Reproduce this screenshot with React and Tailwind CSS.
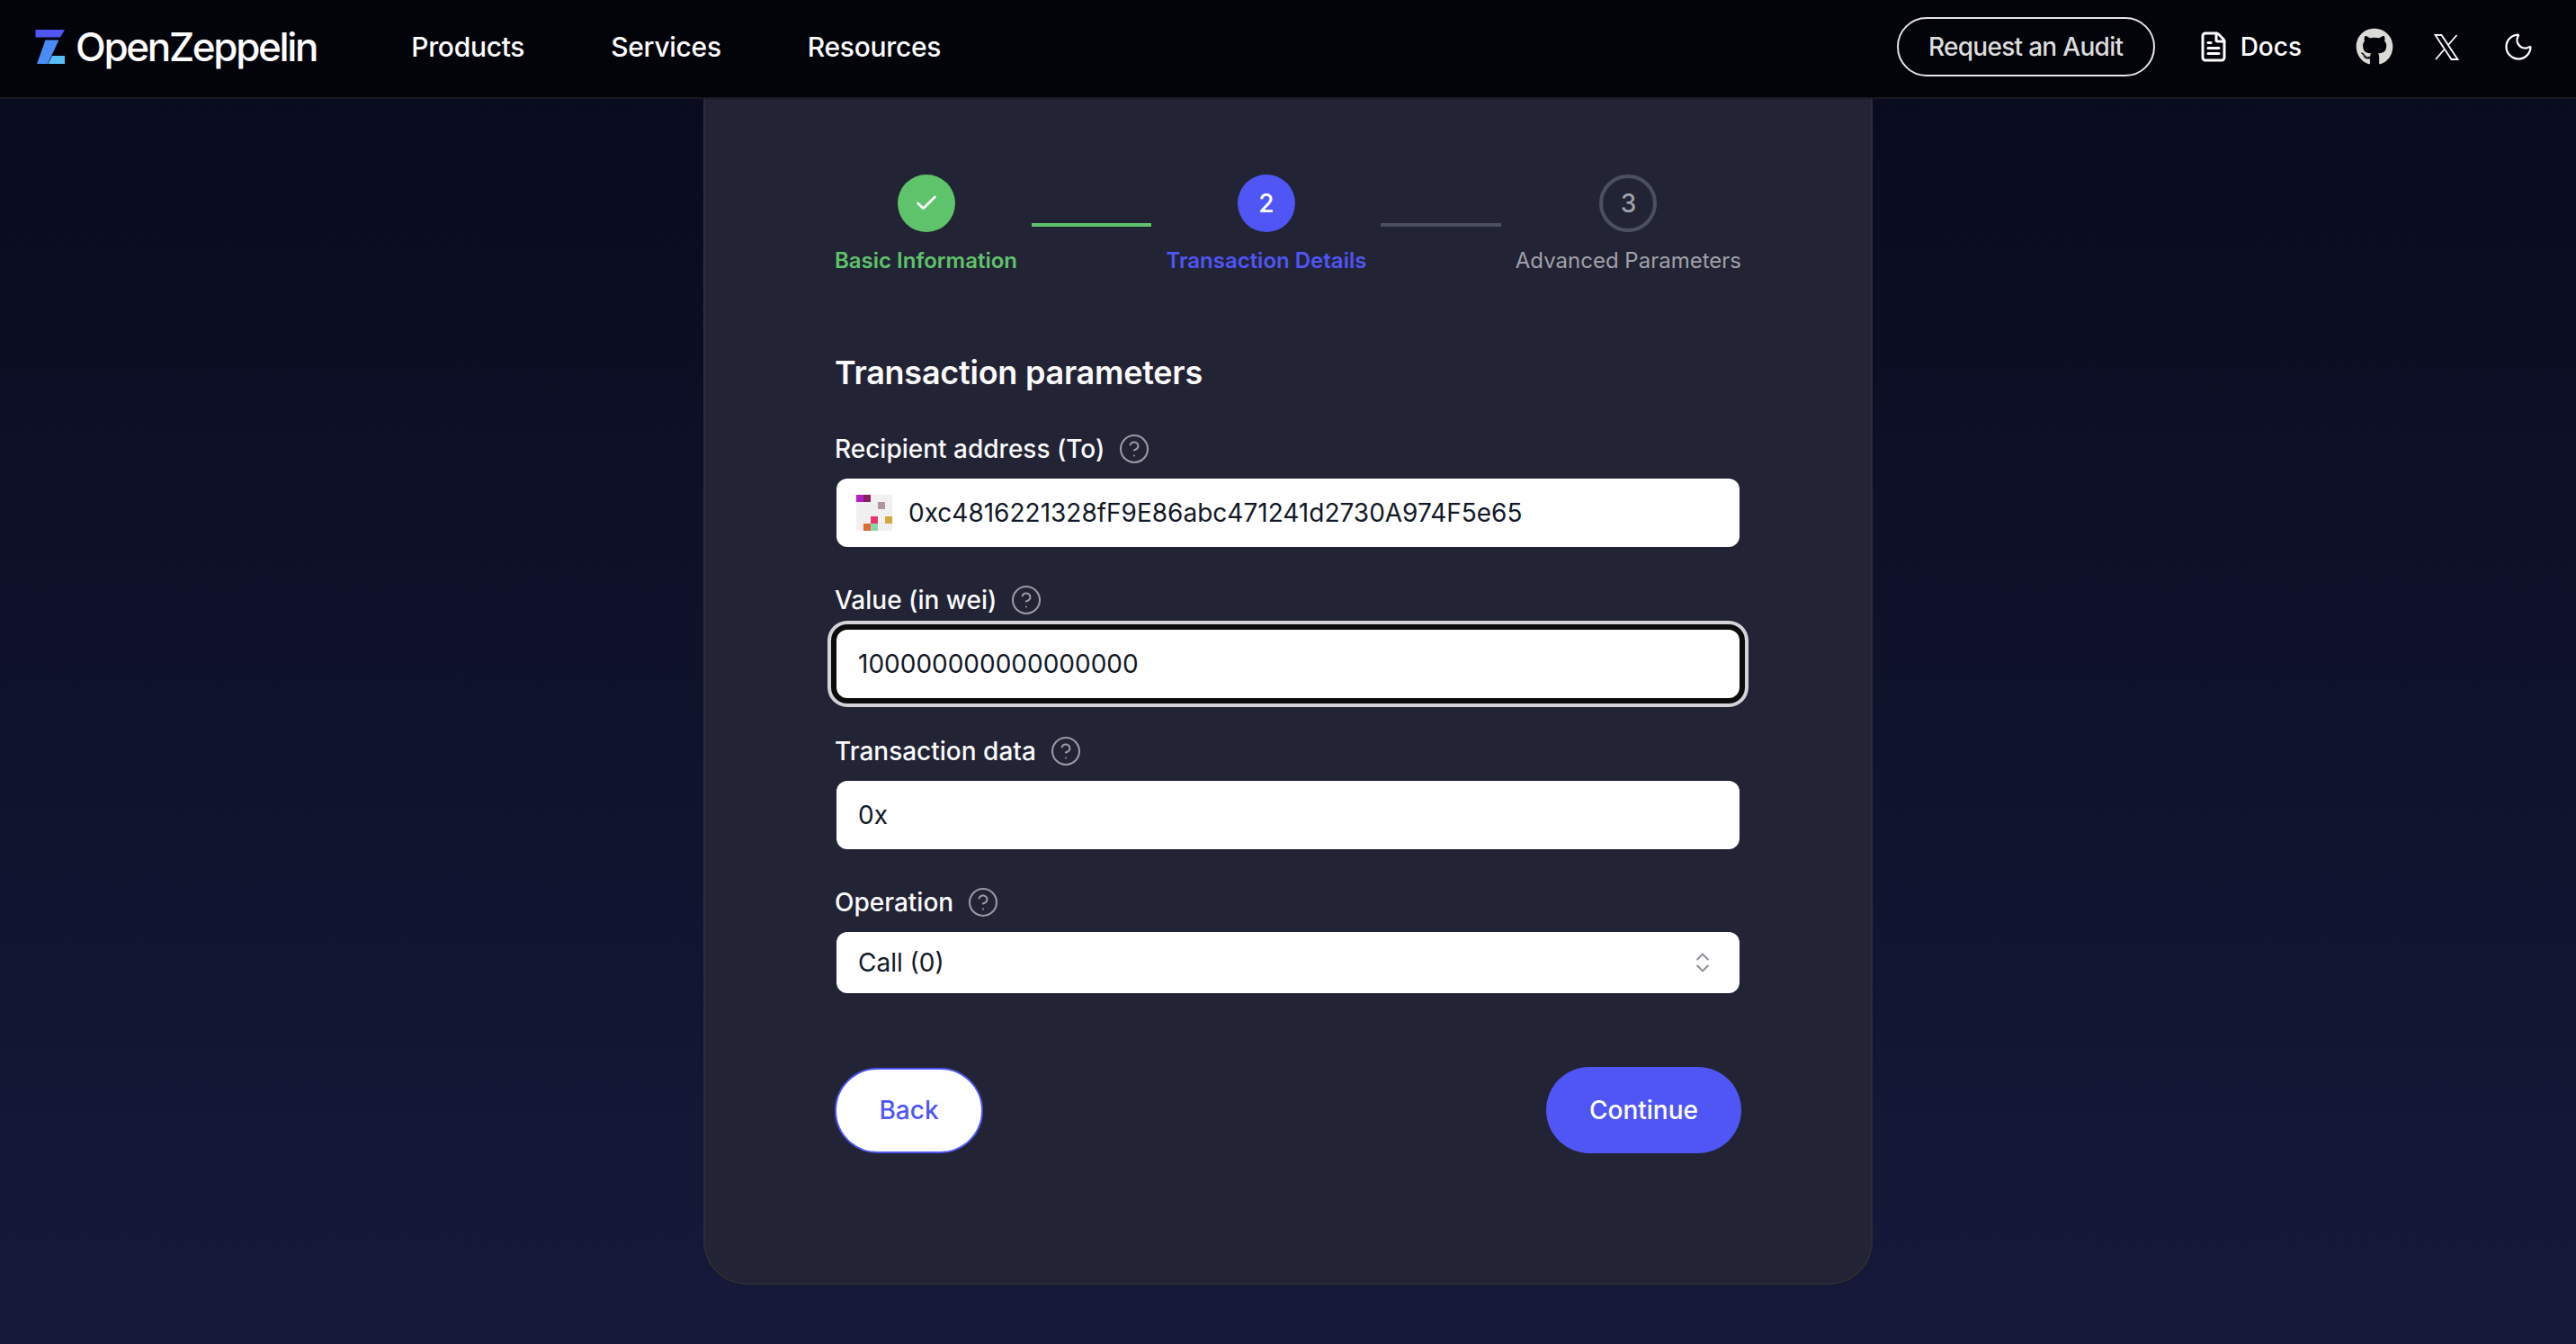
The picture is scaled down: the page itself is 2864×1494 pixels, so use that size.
import React from 'react';
import { Check, ChevronsUpDown, CircleHelp, FileText, Moon } from 'lucide-react';
import { FaGithub } from 'react-icons/fa';

const font = { fontFamily: 'Inter, "Noto Sans", sans-serif' };

const avatarCells = [
  ['#b01fc8', '#85205a', null, null, null],
  [null, null, null, '#b096a5', null],
  [null, null, null, null, null],
  [null, null, '#e8356e', null, '#d4a93c'],
  [null, '#e06a30', '#8fd3ab', null, null],
];

function Logo() {
  return (
    <svg width="33" height="38" viewBox="0 0 33 38" className="shrink-0">
      <path d="M0.5 0H33L28 8.5H0.5Z" fill="#4f56f5" />
      <path d="M11.5 11.5H26.5L14 38H2Z" fill="#4a8cf5" />
      <path d="M19 29H33V38H14.5Z" fill="#54bef5" />
    </svg>
  );
}

function XLogo() {
  return (
    <svg width="28" height="29" viewBox="0 0 28 29" fill="none" stroke="white" className="shrink-0">
      <path d="M1.5 1H8.5L26.5 28H19.5Z" strokeWidth="1.8" />
      <path d="M25.5 1L15.5 12.5M11.5 17L2 28" strokeWidth="1.8" />
    </svg>
  );
}

function Avatar() {
  return (
    <div className="grid grid-cols-5 w-10 h-10 -ml-0.5 bg-[#f0f0f0] shrink-0">
      {avatarCells.flat().map((c, i) => (
        <div key={i} className="w-2 h-2" style={c ? { backgroundColor: c } : undefined} />
      ))}
    </div>
  );
}

function Field({ label, children, className = '' }) {
  return (
    <div className={className}>
      <div className="flex items-center gap-[15px] h-[30px] mb-[18px] text-[28px] font-medium text-[#fafafa]">
        <span>{label}</span>
        <CircleHelp className="w-9 h-9 text-[#9a9aa3]" strokeWidth={1.4} />
      </div>
      {children}
    </div>
  );
}

const Input = ({ children, className = 'h-[76px]' }) => (
  <div className={`flex items-center mx-0.5 px-6 bg-white rounded-xl text-[28px] text-[#111827] ${className}`}>
    {children}
  </div>
);

export default function App() {
  return (
    <div style={font} className="w-full h-[1494px] overflow-hidden flex flex-col bg-gradient-to-b from-[#080b1c] to-[#16193a]">
      {/* Top nav */}
      <header className="h-[110px] shrink-0 flex items-center pl-[39px] pr-[46px] pb-1 bg-[#03030a] border-b-2 border-[#1a1a22]">
        <Logo />
        <span className="ml-3 text-[44px] font-medium tracking-[-0.053em] text-white">OpenZeppelin</span>
        <nav className="flex items-center gap-[96px] ml-[105px] text-[30px] font-medium tracking-[-0.01em] text-white">
          <span>Products</span>
          <span>Services</span>
          <span>Resources</span>
        </nav>
        <div className="ml-auto flex items-center">
          <button className="h-[66px] w-[287px] rounded-full border-2 border-[#e5e5e5] text-[28px] font-medium tracking-[-0.025em] text-[#dcdcdc]">
            Request an Audit
          </button>
          <FileText className="ml-[47px] w-9 h-9 text-white" strokeWidth={2} />
          <span className="ml-3 text-[28px] font-medium text-white">Docs</span>
          <FaGithub className="ml-[60px] w-[42px] h-[42px] text-[#dcdad6]" />
          <div className="ml-[45px]"><XLogo /></div>
          <Moon className="ml-12 w-9 h-9 text-white" strokeWidth={1.5} />
        </div>
      </header>

      {/* Wizard card */}
      <main className="flex-1 flex justify-center">
        <div className="w-[1300px] h-[1318px] rounded-b-[48px] bg-[#222334] border-2 border-t-0 border-[#2c2c34] px-[144px] pt-[84px]">
          <div className="flex items-start">
            <div className="flex flex-col items-center">
              <div className="w-16 h-16 rounded-full bg-[#5fc36b] flex items-center justify-center">
                <Check className="w-7 h-7 text-white" strokeWidth={2.4} />
              </div>
              <span className="mt-4 text-2xl font-semibold text-[#5fc36b]">Basic Information</span>
            </div>
            <div className="flex-1 h-1 mt-[54px] mx-4 bg-[#5fc36b]" />
            <div className="flex flex-col items-center">
              <div className="w-16 h-16 rounded-full bg-[#4f56f5] flex items-center justify-center text-[28px] font-medium text-white">2</div>
              <span className="mt-4 text-2xl font-semibold text-[#4f56f5]">Transaction Details</span>
            </div>
            <div className="flex-1 h-1 mt-[54px] mx-4 bg-[#4b5060]" />
            <div className="flex flex-col items-center">
              <div className="w-16 h-16 rounded-full border-4 border-[#4b5060] flex items-center justify-center text-[28px] font-medium text-[#a1a1aa]">3</div>
              <span className="mt-4 text-2xl text-[#a1a1aa]">Advanced Parameters</span>
            </div>
          </div>

          <h2 className="mt-[84px] text-[36px] leading-[48px] font-semibold tracking-[-0.007em] text-[#fafafa]">Transaction parameters</h2>

          <Field label="Recipient address (To)" className="mt-[46px]">
            <Input>
              <Avatar />
              <span className="ml-[18px]">0xc4816221328fF9E86abc471241d2730A974F5e65</span>
            </Input>
          </Field>

          <Field label="Value (in wei)" className="mt-[44px]">
            <Input className="h-[76px] shadow-[0_0_0_6px_#0c0c0c,0_0_0_10px_#d4d4d8]">100000000000000000</Input>
          </Field>

          <Field label="Transaction data" className="mt-[44px]">
            <Input>0x</Input>
          </Field>

          <Field label="Operation" className="mt-[44px]">
            <Input className="h-[68px] justify-between">
              <span>Call (0)</span>
              <ChevronsUpDown className="w-7 h-7 mr-[3px] text-[#8b8b93]" strokeWidth={1.7} />
            </Input>
          </Field>

          <div className="flex items-center justify-between mt-[82px]">
            <button className="h-[95px] w-[165px] rounded-full bg-white border-2 border-[#4f56f5] text-[28px] font-medium text-[#4f56f5]">Back</button>
            <button className="h-[96px] w-[217px] rounded-full bg-[#4f56f5] text-[28px] font-medium text-white">Continue</button>
          </div>
        </div>
      </main>
    </div>
  );
}
